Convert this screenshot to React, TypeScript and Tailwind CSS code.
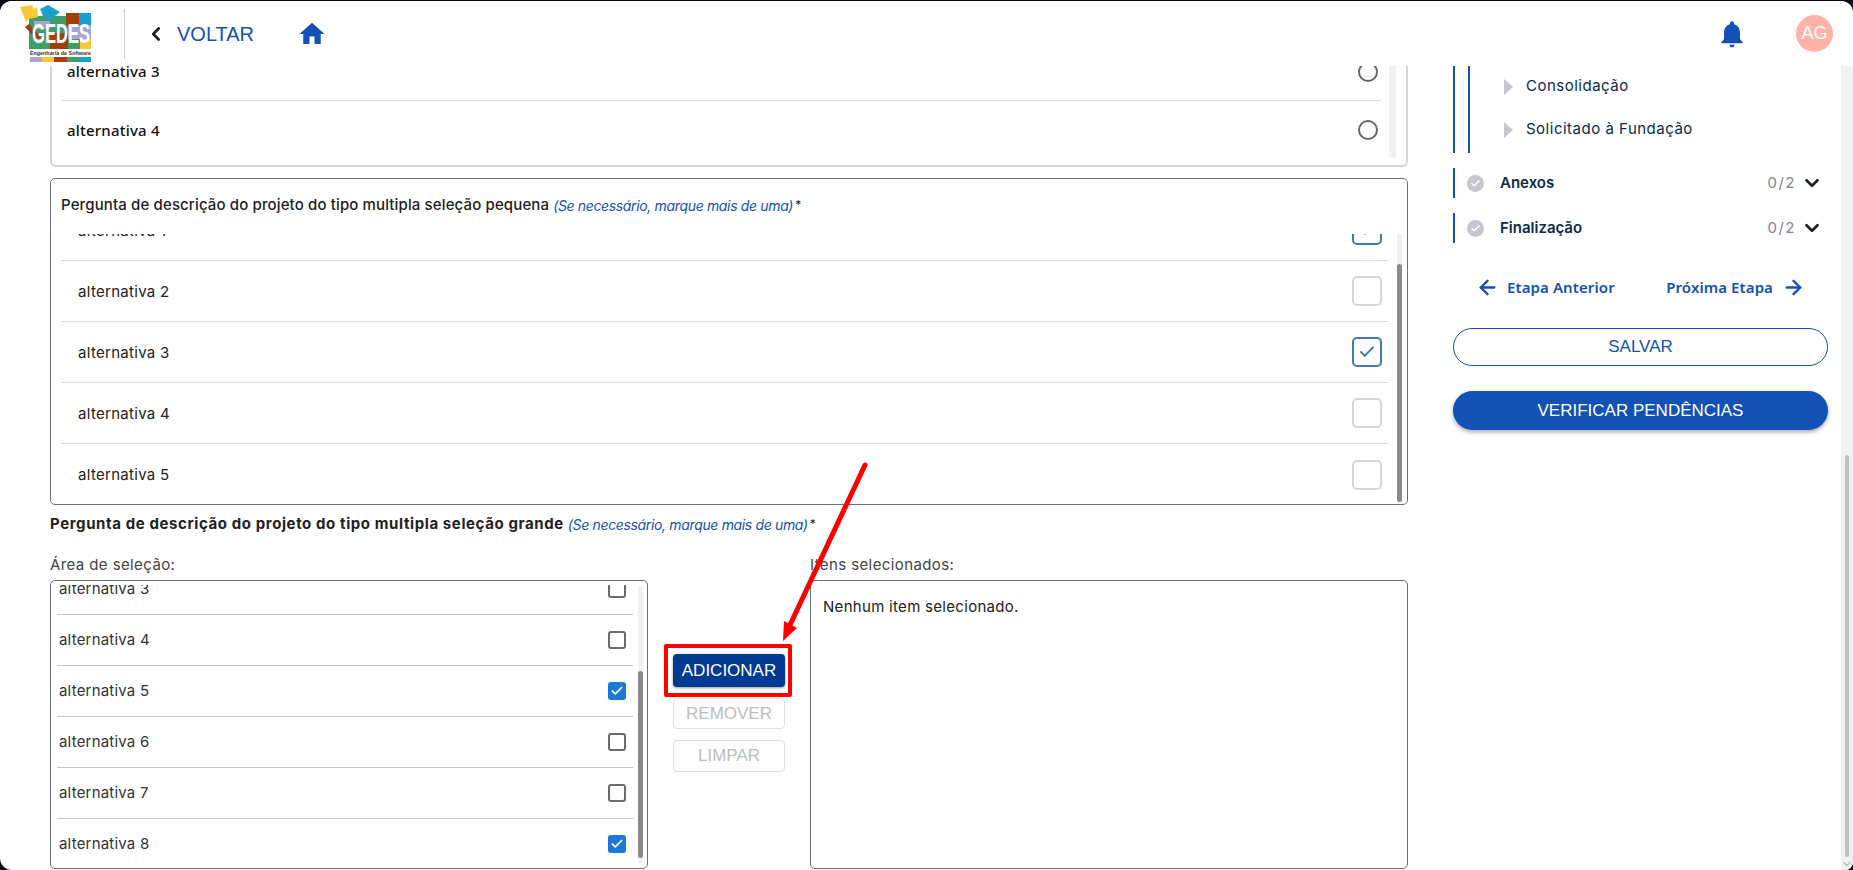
import { Check, ChevronDown, ChevronLeft, ArrowLeft, ArrowRight } from "lucide-react";

const sans = "font-['Inter','Liberation_Sans',sans-serif]";

const GedesLogo = () => (
  <svg width="72" height="57" viewBox="0 0 72 57" className="shrink-0">
    <rect x="9" y="11" width="62" height="33" fill="#3d9e6a" />
    <rect x="46" y="8" width="13" height="12" fill="#a33f0b" />
    <rect x="59" y="8" width="12" height="12" fill="#1b9fd0" />
    <rect x="62" y="20" width="9" height="14" fill="#a9a4d6" />
    <rect x="60" y="34" width="11" height="10" fill="#f5c93a" />
    <rect x="30" y="28" width="18" height="16" fill="#a33f0b" />
    <rect x="14" y="16" width="16" height="8" fill="#a9a4d6" />
    <rect x="48" y="20" width="14" height="14" fill="#a9a4d6" />
    <path d="M0 2 L12 0 L14 4 L17 2 L18 12 L9 14 L6 17 Z" fill="#f5c93a" />
    <path d="M20 4 L28 0 L40 7 L35 11 L30 15 L23 11 Z" fill="#1b9fd0" />
    <path d="M9 19 L21 32 L17 35 L5 22 Z" fill="#a33f0b" />
    <text x="12" y="38" fill="#ffffff" fontFamily="Liberation Sans" fontWeight="700" fontSize="27" textLength="58" lengthAdjust="spacingAndGlyphs">GEDES</text>
    <text x="10" y="50" fill="#333333" fontFamily="Liberation Sans" fontWeight="700" fontSize="6" textLength="61" lengthAdjust="spacingAndGlyphs">Engenharia de Software</text>
    <rect x="10" y="52" width="12" height="5" fill="#a9a4d6" />
    <rect x="22" y="52" width="12" height="5" fill="#f5c93a" />
    <rect x="34" y="52" width="13" height="5" fill="#a33f0b" />
    <rect x="47" y="52" width="12" height="5" fill="#3d9e6a" />
    <rect x="59" y="52" width="12" height="5" fill="#1b9fd0" />
  </svg>
);

const HomeIcon = () => (
  <svg width="30" height="30" viewBox="0 0 24 24" className="ml-[43px] fill-[#1351b4]">
    <path d="M10 20v-6h4v6h5v-8h3L12 3 2 12h3v8z" />
  </svg>
);

const BellIcon = () => (
  <svg width="32" height="32" viewBox="0 0 24 24" className="ml-auto fill-[#1351b4]">
    <path d="M12 22c1.1 0 2-.9 2-2h-4c0 1.1.89 2 2 2zm6-6v-5c0-3.07-1.64-5.64-4.5-6.32V4c0-.83-.67-1.5-1.5-1.5s-1.5.67-1.5 1.5v.68C7.63 5.36 6 7.92 6 11v5l-2 2v1h16v-1l-2-2z" />
  </svg>
);

const Header = () => (
  <header className="flex h-[65px] shrink-0 items-center bg-white pl-[20px] pr-[20px]">
    <GedesLogo />
    <div className="ml-[32px] h-[50px] w-px bg-[#c9ccd1]" />
    <ChevronLeft className="ml-[20px] h-[22px] w-[22px] text-[#222]" strokeWidth={3} />
    <span className="ml-[10px] font-['Liberation_Sans',sans-serif] text-[20px] text-[#1351b4]">VOLTAR</span>
    <HomeIcon />
    <BellIcon />
    <div className="ml-[48px] flex h-[37px] w-[37px] items-center justify-center rounded-full bg-[#ffb3a8] font-['Liberation_Sans',sans-serif] text-[18px] text-white">
      AG
    </div>
  </header>
);

const RadioCard = () => (
  <div className="-mt-[23px] flex h-[124px] rounded-b-[6px] border-x-2 border-b-2 border-[#d1d5db] pl-[10px] pr-[10px] font-['Noto_Sans',sans-serif] text-[15px] font-medium tracking-[0.2px] text-[#111]">
    <div className="flex-1">
      {["alternativa 3", "alternativa 4"].map((label, i) => (
        <div key={label} className={`flex h-[58px] items-center justify-between pl-[5px] pr-[3px] ${i === 0 ? "border-b border-[#dcdee1]" : ""}`}>
          <span>{label}</span>
          <span className="h-[20px] w-[20px] rounded-full border-2 border-[#666]" />
        </div>
      ))}
    </div>
    <div className="ml-[8px] mb-[7px] w-[7px] rounded-b-[3px] bg-[#f1f1f1]" />
  </div>
);

const SmallChecks = () => {
  const rows = [
    { label: "alternativa 1", checked: true },
    { label: "alternativa 2", checked: false },
    { label: "alternativa 3", checked: true },
    { label: "alternativa 4", checked: false },
    { label: "alternativa 5", checked: false },
  ];
  return (
    <div className="mt-[11px] h-[327px] rounded-[5px] border border-[#6e7079] pl-[10px] pr-[4px]">
      <div className={`flex h-[55px] items-center pb-[3px] text-[15px] tracking-[0.13px] text-[#222] ${sans}`}>
        <span className="font-medium">Pergunta de descrição do projeto do tipo multipla seleção pequena</span>
        <span className="ml-[4px] text-[14px] italic tracking-[-0.35px] text-[#1351b4]">(Se necessário, marque mais de uma)</span>
        <span className="ml-[2px] text-[12px]">*</span>
      </div>
      <div className="flex h-[269px]">
        <div className="flex-1 overflow-hidden">
          <div className="-mt-[34px]">
            {rows.map((r, i) => (
              <div key={r.label} className={`flex h-[61px] items-center justify-between pl-[17px] pr-[6px] text-[15px] tracking-[0.3px] text-[#222] ${sans} ${i < 4 ? "border-b border-[#dcdee1]" : ""}`}>
                <span className="pt-[2px]">{r.label}</span>
                <span className={`flex h-[30px] w-[30px] items-center justify-center rounded-[5px] border-2 ${r.checked ? "border-[#3d7bb0]" : "border-[#d3d6db]"}`}>
                  {r.checked && <Check className="h-[18px] w-[18px] text-[#3d7bb0]" strokeWidth={2.5} />}
                </span>
              </div>
            ))}
          </div>
        </div>
        <div className="ml-[9px] mr-[1px] w-[5px] bg-[#f1f1f1]">
          <div className="mt-[30px] h-[238px] rounded-[3px] bg-[#8a8a8a]" />
        </div>
      </div>
    </div>
  );
};

const BigChecks = () => {
  const rows = [
    { label: "alternativa 3", checked: false },
    { label: "alternativa 4", checked: false },
    { label: "alternativa 5", checked: true },
    { label: "alternativa 6", checked: false },
    { label: "alternativa 7", checked: false },
    { label: "alternativa 8", checked: true },
  ];
  return (
    <div className="flex h-[289px] rounded-[5px] border border-[#6e7079] pl-[6px] pr-[4px] pt-[4px]">
      <div className="h-[280px] flex-1 overflow-hidden">
        <div className="-mt-[21px]">
          {rows.map((r) => (
            <div key={r.label} className={`flex h-[51px] items-center justify-between border-b border-[#c4c6d0] pl-[2px] pr-[7px] text-[15px] tracking-[0.2px] text-[#333] ${sans}`}>
              <span>{r.label}</span>
              {r.checked ? (
                <span className="flex h-[18px] w-[18px] items-center justify-center rounded-[3px] bg-[#1c78d6]">
                  <Check className="h-[14px] w-[14px] text-white" strokeWidth={3} />
                </span>
              ) : (
                <span className="h-[18px] w-[18px] rounded-[3px] border-2 border-[#6b6b6b]" />
              )}
            </div>
          ))}
        </div>
      </div>
      <div className="ml-[5px] mt-[2px] h-[276px] w-[5px] bg-[#f1f1f1]">
        <div className="mt-[84px] h-[187px] rounded-[3px] bg-[#8a8a8a]" />
      </div>
    </div>
  );
};

const TransferButtons = () => (
  <div className="mt-[99px] flex w-[112px] flex-col font-['Liberation_Sans',sans-serif] text-[17px]">
    <div className="relative flex h-[33px] items-center justify-center rounded-[4px] bg-[#003a91] text-white shadow-[0_1px_3px_rgba(0,0,0,0.4)]">
      ADICIONAR
      <div className="absolute -bottom-[10px] -left-[9px] -right-[7px] -top-[10px] rounded-[2px] border-[4px] border-[#ff0000]" />
    </div>
    <div className="mt-[11px] flex h-[31px] items-center justify-center rounded-[4px] border border-[#e0e0e0] text-[#bdbdbd]">REMOVER</div>
    <div className="mt-[11px] flex h-[32px] items-center justify-center rounded-[4px] border border-[#e0e0e0] text-[#bdbdbd]">LIMPAR</div>
  </div>
);

const Section = ({ title, count }: { title: string; count: string }) => (
  <div className="mt-[15px] flex h-[30px] items-center border-l-2 border-[#1351b4] pl-[12px] first:mt-0">
    <span className="flex h-[17px] w-[17px] items-center justify-center rounded-full bg-[#c5c6d0]">
      <Check className="h-[11px] w-[11px] text-white" strokeWidth={3} />
    </span>
    <span className={`ml-[16px] text-[15px] font-semibold text-[#0c2a4d] ${sans}`}>{title}</span>
    <span className={`ml-auto text-[15px] tracking-[1.5px] text-[#808592] ${sans}`}>{count}</span>
    <ChevronDown className="ml-[5px] mr-[5px] h-[22px] w-[22px] text-[#222]" strokeWidth={3} />
  </div>
);

const SubItem = ({ label }: { label: string }) => (
  <div className="flex h-[43px] items-center pl-[34px]">
    <span className="h-0 w-0 border-y-[8px] border-l-[9px] border-y-transparent border-l-[#c5c6d0]" />
    <span className={`ml-[13px] text-[15px] tracking-[0.5px] text-[#0c2a4d] ${sans}`}>{label}</span>
  </div>
);

const RightPanel = () => (
  <aside className="ml-[45px] w-[375px] shrink-0">
    <div className="h-[87px] border-l-2 border-[#1351b4] pl-[13px]">
      <div className="h-full border-l-2 border-[#1351b4]">
        <div className="-translate-y-[1px]">
          <SubItem label="Consolidação" />
          <SubItem label="Solicitado à Fundação" />
        </div>
      </div>
    </div>
    <div className="mt-[15px]">
      <Section title="Anexos" count="0/2" />
      <Section title="Finalização" count="0/2" />
    </div>
    <div className="mt-[33px] flex items-center justify-between pl-[23px] pr-[23px] font-['Noto_Sans',sans-serif] text-[15px] font-semibold tracking-[0.1px] text-[#1351b4]">
      <span className="flex items-center gap-[8px]">
        <ArrowLeft className="h-[23px] w-[23px]" strokeWidth={2.5} />
        Etapa Anterior
      </span>
      <span className="flex items-center gap-[9px]">
        Próxima Etapa
        <ArrowRight className="h-[23px] w-[23px]" strokeWidth={2.5} />
      </span>
    </div>
    <button className="mt-[29px] flex h-[38px] w-full items-center justify-center rounded-full border border-[#1351b4] font-['Liberation_Sans',sans-serif] text-[17px] text-[#1351b4]">
      SALVAR
    </button>
    <button className="mt-[25px] flex h-[39px] w-full items-center justify-center rounded-full bg-[#1351b4] font-['Liberation_Sans',sans-serif] text-[17px] text-white shadow-[0_2px_4px_rgba(0,0,0,0.35)]">
      VERIFICAR PENDÊNCIAS
    </button>
  </aside>
);

const PageScrollbar = () => (
  <div className="relative ml-auto flex w-[12px] flex-col items-center bg-[#f1f1f1]">
    <div className="mt-[389px] h-[404px] w-[4px] rounded-[2px] bg-[#c1c1c1]" />
    <ChevronDown className="mt-[1px] h-[12px] w-[12px] text-[#c1c1c1]" strokeWidth={3} />
  </div>
);

export default function App() {
  return (
    <div className="h-[870px] w-[1853px] overflow-hidden bg-[#0a0a14] pt-[1px]">
      <div className="relative flex h-[869px] flex-col overflow-hidden rounded-[12px] rounded-br-[8px] bg-white">
        <Header />
        <div className="flex min-h-0 flex-1">
          <main className="ml-[50px] w-[1358px] shrink-0 overflow-hidden">
            <RadioCard />
            <SmallChecks />
            <div className={`mt-[8px] flex h-[22px] items-center text-[15px] font-bold tracking-[0.6px] text-[#222] ${sans}`}>
              Pergunta de descrição do projeto do tipo multipla seleção grande
              <span className="ml-[4px] text-[14px] font-normal italic tracking-[-0.35px] text-[#1351b4]">(Se necessário, marque mais de uma)</span>
              <span className="ml-[2px] text-[12px] font-normal">*</span>
            </div>
            <div className="mt-[20px] flex">
              <div className="w-[598px] shrink-0">
                <div className={`mb-[5px] text-[15px] leading-[20px] tracking-[0.4px] text-[#444] ${sans}`}>Área de seleção:</div>
                <BigChecks />
              </div>
              <div className="ml-[25px] shrink-0"><TransferButtons /></div>
              <div className="ml-[25px] flex-1">
                <div className={`mb-[5px] text-[15px] leading-[20px] tracking-[0.4px] text-[#444] ${sans}`}>Itens selecionados:</div>
                <div className={`h-[289px] rounded-[5px] border border-[#6e7079] px-[12px] pb-[15px] pt-[16px] text-[15px] leading-[20px] tracking-[0.3px] text-[#222] ${sans}`}>
                  Nenhum item selecionado.
                </div>
              </div>
            </div>
          </main>
          <RightPanel />
          <PageScrollbar />
        </div>
        <svg className="pointer-events-none absolute left-0 top-0" width="1853" height="869">
          <line x1="865" y1="464" x2="790" y2="624" stroke="#ff0000" strokeWidth="5" strokeLinecap="round" />
          <polygon points="783,640 784,620 797,627" fill="#ff0000" />
        </svg>
      </div>
    </div>
  );
}
